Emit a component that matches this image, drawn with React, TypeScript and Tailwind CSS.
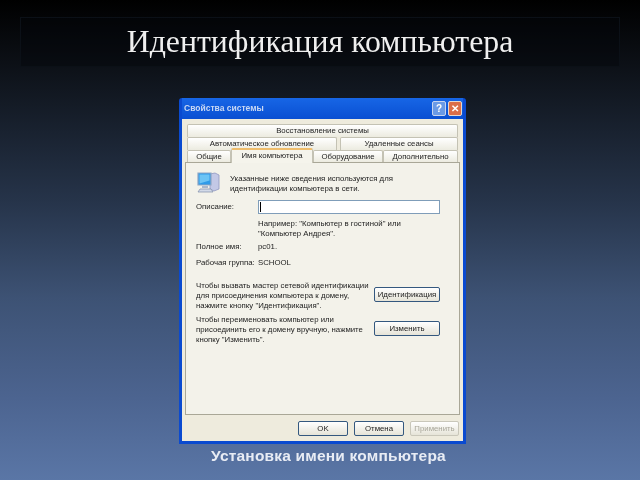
import React from 'react';

const tabBase = "flex items-center justify-center rounded-t-[2px] border border-[#c4c2b4] border-b-0 bg-gradient-to-b from-white to-[#ecebe0] text-[7.8px] text-[#222]";

const XpButton = ({ label, className = "", disabled = false }: { label: string; className?: string; disabled?: boolean }) => (
    <div className={`flex h-[15px] items-center justify-center rounded-[2px] border bg-gradient-to-b from-white to-[#e6e4d8] text-[7.8px] ${disabled ? 'border-[#c9c7ba] text-[#a8a699]' : 'border-[#34587f] text-[#222]'} ${className}`}>
        {label}
    </div>
);

const ComputerIcon = () => (
    <svg width="24" height="25" viewBox="0 0 24 25">
        <path d="M14 4l5-1 4 2v14l-5 2-4-2z" fill="#c3c8e6" stroke="#8f97c0" strokeWidth="0.8" />
        <path d="M2 3h13v12H2z" fill="#2f9be8" stroke="#8fa6c4" strokeWidth="1.2" />
        <path d="M3.5 4.5h10v6l-10 3z" fill="#6cc4f5" />
        <path d="M6 16h6v2H6z" fill="#a9b7cc" />
        <path d="M4 19h11l2 3H2z" fill="#d3dae8" stroke="#7f8eaa" strokeWidth="0.7" />
    </svg>
);

export default function App() {
    return (
        <div className="flex h-[480px] w-[640px] flex-col overflow-hidden bg-[linear-gradient(to_bottom,#000000_0%,#0c1016_13%,#26344a_42%,#3d5274_62%,#4c6490_83%,#5a76a6_100%)] font-['Liberation_Sans',sans-serif]">
            <div className="mx-[20px] mt-[17px] flex h-[50px] shrink-0 items-center justify-center border border-[#0b1017] bg-[#03060a]/40">
                <h1 className="font-['Liberation_Serif',serif] text-[31.8px] leading-none text-[#efefef] blur-[0.3px]">Идентификация компьютера</h1>
            </div>

            <div className="ml-[179px] mt-[31px] flex h-[346px] w-[287px] shrink-0 flex-col rounded-t-[3px] bg-[#0a4ad0] px-[3px] pb-[3px] blur-[0.5px]">
                <div className="flex h-[21px] shrink-0 items-center justify-between bg-gradient-to-b from-[#1766e6] to-[#0a4fd2] pl-[2px] pr-[1px]">
                    <span className="text-[8.5px] font-bold text-[#c8d8f4]">Свойства системы</span>
                    <div className="flex gap-[2px]">
                        <div className="flex h-[15px] w-[14px] items-center justify-center rounded-[2px] border border-[#c8d4ee] bg-[#6a9ae6] text-[10px] font-bold leading-none text-white">?</div>
                        <div className="flex h-[15px] w-[14px] items-center justify-center rounded-[2px] border border-[#e4d8d0] bg-[#dc6e48] text-[10px] font-bold leading-none text-white">✕</div>
                    </div>
                </div>

                <div className="flex flex-1 flex-col bg-[#eeebdd] px-[3px]">
                    <div className={`${tabBase} mx-[2px] mt-[5px] h-[13px] shrink-0`}>Восстановление системы</div>
                    <div className="mx-[2px] flex h-[13px] shrink-0 gap-[3px]">
                        <div className={`${tabBase} w-[150px]`}>Автоматическое обновление</div>
                        <div className={`${tabBase} flex-1`}>Удаленные сеансы</div>
                    </div>
                    <div className="mx-[2px] flex h-[12px] shrink-0 items-end">
                        <div className={`${tabBase} h-[12px] w-[44px]`}>Общие</div>
                        <div className="relative z-10 mb-[-1px] flex h-[15px] w-[82px] items-start justify-center rounded-t-[2px] border-x border-[#c4c2b4] border-t-2 border-t-[#efbd6c] bg-[#f5f4ec] text-[7.8px] text-[#222]">Имя компьютера</div>
                        <div className={`${tabBase} h-[12px] w-[70px]`}>Оборудование</div>
                        <div className={`${tabBase} h-[12px] flex-1`}>Дополнительно</div>
                    </div>

                    <div className="flex h-[253px] shrink-0 flex-col border border-[#a9a797] bg-[#f3f2ea] pl-[10px] pr-[19px] text-[7.8px] leading-[10px] text-[#222]">
                        <div className="mt-[7px] flex h-[25px] items-center">
                            <ComputerIcon />
                            <p className="ml-[10px] mt-[2px] w-[200px]">Указанные ниже сведения используются для идентификации компьютера в сети.</p>
                        </div>
                        <div className="mt-[5px] flex h-[14px] items-center">
                            <span className="w-[62px]">Описание:</span>
                            <div className="h-[14px] flex-1 border border-[#7f9db9] bg-white pl-[1px]">
                                <div className="mt-[1px] h-[10px] w-px bg-black" />
                            </div>
                        </div>
                        <p className="ml-[62px] mt-[5px]">Например: "Компьютер в гостиной" или<br />"Компьютер Андрея".</p>
                        <div className="flex h-[16px] items-center">
                            <span className="w-[62px]">Полное имя:</span>
                            <span>pc01.</span>
                        </div>
                        <div className="flex h-[16px] items-center">
                            <span className="w-[62px]">Рабочая группа:</span>
                            <span>SCHOOL</span>
                        </div>
                        <div className="mt-[10px] flex items-start justify-between">
                            <p className="whitespace-nowrap">Чтобы вызвать мастер сетевой идентификации<br />для присоединения компьютера к домену,<br />нажмите кнопку "Идентификация".</p>
                            <XpButton label="Идентификация" className="mt-[6px] w-[66px]" />
                        </div>
                        <div className="mt-[4px] flex items-start justify-between">
                            <p className="whitespace-nowrap">Чтобы переименовать компьютер или<br />присоединить его к домену вручную, нажмите<br />кнопку "Изменить".</p>
                            <XpButton label="Изменить" className="mt-[6px] w-[66px]" />
                        </div>
                    </div>

                    <div className="mt-[6px] flex justify-end gap-[6px] pr-[1px]">
                        <XpButton label="OK" className="w-[50px]" />
                        <XpButton label="Отмена" className="w-[50px]" />
                        <XpButton label="Применить" className="w-[49px]" disabled />
                    </div>
                </div>
            </div>

            <p className="mt-[3px] ml-[17px] text-center text-[15.5px] font-bold leading-[18px] tracking-[0.2px] text-[#e8ecf4] blur-[0.3px]">Установка имени компьютера</p>
        </div>
    );
}
